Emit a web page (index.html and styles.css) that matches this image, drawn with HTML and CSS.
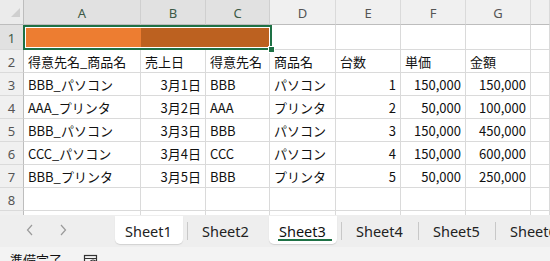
FILE: index.html
```html
<!DOCTYPE html>
<html lang="ja">
<head>
<meta charset="utf-8">
<title>Sheet</title>
<link rel="stylesheet" href="styles.css">
</head>
<body>
<div class="app">
  <div class="sheet">
    <div class="corner"><span class="tri"></span></div>
    <div class="ch sel">A</div>
    <div class="ch sel">B</div>
    <div class="ch sel">C</div>
    <div class="ch">D</div>
    <div class="ch">E</div>
    <div class="ch">F</div>
    <div class="ch">G</div>
    <div class="ch"></div>

    <div class="rh sel">1</div>
    <div class="c o1"></div>
    <div class="c o2 o2b"></div>
    <div class="c o2"></div>
    <div class="c"></div><div class="c"></div><div class="c"></div><div class="c"></div><div class="c"></div>

    <div class="rh">2</div>
    <div class="c">得意先名_商品名</div>
    <div class="c">売上日</div>
    <div class="c">得意先名</div>
    <div class="c">商品名</div>
    <div class="c">台数</div>
    <div class="c">単価</div>
    <div class="c">金額</div>
    <div class="c"></div>

    <div class="rh">3</div>
    <div class="c">BBB_パソコン</div>
    <div class="c r">3月1日</div>
    <div class="c">BBB</div>
    <div class="c">パソコン</div>
    <div class="c r">1</div>
    <div class="c r">150,000</div>
    <div class="c r">150,000</div>
    <div class="c"></div>

    <div class="rh">4</div>
    <div class="c">AAA_プリンタ</div>
    <div class="c r">3月2日</div>
    <div class="c">AAA</div>
    <div class="c">プリンタ</div>
    <div class="c r">2</div>
    <div class="c r">50,000</div>
    <div class="c r">100,000</div>
    <div class="c"></div>

    <div class="rh">5</div>
    <div class="c">BBB_パソコン</div>
    <div class="c r">3月3日</div>
    <div class="c">BBB</div>
    <div class="c">パソコン</div>
    <div class="c r">3</div>
    <div class="c r">150,000</div>
    <div class="c r">450,000</div>
    <div class="c"></div>

    <div class="rh">6</div>
    <div class="c">CCC_パソコン</div>
    <div class="c r">3月4日</div>
    <div class="c">CCC</div>
    <div class="c">パソコン</div>
    <div class="c r">4</div>
    <div class="c r">150,000</div>
    <div class="c r">600,000</div>
    <div class="c"></div>

    <div class="rh">7</div>
    <div class="c">BBB_プリンタ</div>
    <div class="c r">3月5日</div>
    <div class="c">BBB</div>
    <div class="c">プリンタ</div>
    <div class="c r">5</div>
    <div class="c r">50,000</div>
    <div class="c r">250,000</div>
    <div class="c"></div>

    <div class="rh">8</div>
    <div class="c"></div><div class="c"></div><div class="c"></div><div class="c"></div>
    <div class="c"></div><div class="c"></div><div class="c"></div><div class="c"></div>

    <div class="rh cut"></div>
    <div class="c cut"></div><div class="c cut"></div><div class="c cut"></div><div class="c cut"></div>
    <div class="c cut"></div><div class="c cut"></div><div class="c cut"></div><div class="c cut"></div>

    <div class="selection"><span class="handle"></span></div>
  </div>

  <div class="tabbar">
    <div class="nav">
      <svg class="arrow" width="8" height="12" viewBox="0 0 8 12"><path d="M6 1 L1.5 6 L6 11" fill="none" stroke="#9a9a9a" stroke-width="1.2"/></svg>
      <svg class="arrow" width="8" height="12" viewBox="0 0 8 12"><path d="M2 1 L6.5 6 L2 11" fill="none" stroke="#9a9a9a" stroke-width="1.2"/></svg>
    </div>
    <div class="tab white">Sheet1</div>
    <span class="sep"></span>
    <div class="tab">Sheet2</div>
    <span class="sep hidden"></span>
    <div class="tab white active">Sheet3</div>
    <span class="sep"></span>
    <div class="tab">Sheet4</div>
    <span class="sep"></span>
    <div class="tab">Sheet5</div>
    <span class="sep"></span>
    <div class="tab">Sheet6</div>
  </div>

  <div class="status">
    <span class="ready">準備完了</span>
    <svg class="sicon" width="16" height="14" viewBox="0 0 16 14"><rect x="1.5" y="1.5" width="12" height="11" fill="none" stroke="#333" stroke-width="1.2"/><line x1="1.5" y1="4.5" x2="13.5" y2="4.5" stroke="#333" stroke-width="1"/><circle cx="10" cy="9" r="3" fill="#f3f3f3" stroke="#333" stroke-width="1.1"/></svg>
  </div>
</div>
</body>
</html>
```

FILE: styles.css
```css
* { box-sizing: border-box; }
html, body { margin: 0; padding: 0; background: #ffffff; }
body { width: 550px; height: 261px; overflow: hidden; }

.app {
  width: 550px;
  height: 261px;
  display: flex;
  flex-direction: column;
  font-family: "Noto Sans CJK JP", "Noto Sans", sans-serif;
}

.sheet {
  position: relative;
  display: grid;
  grid-template-columns: 24px 117px 65px 64px 66px 65px 65px 65px 1fr;
  grid-template-rows: 25px 25px repeat(7, 23px) 4px;
  height: 215px;
  flex: none;
  overflow: hidden;
}

.corner {
  position: relative;
  background: #ebebeb;
  border-right: 1px solid #bdbdbd;
  border-bottom: 1px solid #bdbdbd;
}
.tri {
  position: absolute;
  right: 3px;
  bottom: 7px;
  width: 9px;
  height: 9px;
  background: #cfcfcf;
  clip-path: polygon(100% 0, 100% 100%, 0 100%);
}

.ch {
  background: #f0f0f0;
  border-right: 1px solid #dadada;
  border-bottom: 1px solid #bdbdbd;
  font-family: "Noto Sans", sans-serif;
  font-size: 13px;
  color: #555;
  display: flex;
  align-items: center;
  justify-content: center;
  padding-top: 1px;
}
.ch.sel { background: #e1e1e1; color: #3d5a46; border-right-color: #cfcfcf; }

.rh {
  background: #f0f0f0;
  border-right: 1px solid #bdbdbd;
  border-bottom: 1px solid #dadada;
  font-family: "Noto Sans", sans-serif;
  font-size: 13px;
  color: #555;
  display: flex;
  align-items: center;
  justify-content: center;
  padding-top: 1px;
}
.rh.sel { background: #e1e1e1; color: #3d5a46; }

.c {
  border-right: 1px solid #dadada;
  border-bottom: 1px solid #dadada;
  font-size: 13px;
  color: #111;
  display: flex;
  align-items: center;
  padding: 1px 3px 0 4px;
  white-space: nowrap;
  overflow: hidden;
}
.c.r { justify-content: flex-end; padding-right: 4px; }
.cut { border-bottom: none; }

.o1 { background: #ed7d31; border-right-color: #ed7d31; }
.o2 { background: #bc6120; }
.o2b { border-right-color: #bc6120; }

.selection {
  position: absolute;
  left: 23px;
  top: 25px;
  width: 249px;
  height: 25px;
  border: 2px solid #1e7145;
  box-shadow: inset 0 0 0 1px #ffffff;
}
.handle {
  position: absolute;
  right: -5px;
  bottom: -5px;
  width: 7px;
  height: 7px;
  background: #1e7145;
  border: 1px solid #ffffff;
}

.tabbar {
  height: 32px;
  flex: none;
  background: #eeeeee;
  display: flex;
  align-items: flex-start;
  padding-top: 1px;
  font-family: "Noto Sans", sans-serif;
  font-size: 14.5px;
  color: #222;
  overflow: hidden;
}
.nav {
  width: 115px;
  height: 28px;
  display: flex;
  align-items: center;
  padding-left: 26px;
  gap: 25px;
  flex: none;
}
.arrow { display: block; }

.tab {
  position: relative;
  width: 68px;
  height: 28px;
  flex: none;
  display: flex;
  align-items: center;
  padding-left: 10px;
  padding-top: 1px;
  white-space: nowrap;
}
.tab.white {
  background: #ffffff;
  border-radius: 0 0 5px 5px;
  box-shadow: 0 1px 1px rgba(0,0,0,0.12);
}
.tab.active { color: #111; }
.tab.active::after {
  content: "";
  position: absolute;
  left: 9px;
  right: 5px;
  bottom: 3px;
  height: 2px;
  background: #1e7145;
}

.sep {
  width: 1px;
  height: 18px;
  margin: 6px 4px 0 4px;
  background: #c8c8c8;
  flex: none;
}
.sep.hidden { background: transparent; }

.status {
  flex: 1;
  background: #f3f3f3;
  display: flex;
  align-items: flex-start;
  padding: 4px 0 0 10px;
  font-size: 13px;
  color: #111;
  line-height: 17px;
  overflow: hidden;
}
.ready { display: block; }
.sicon { margin-left: 21px; margin-top: 3px; flex: none; }
```
